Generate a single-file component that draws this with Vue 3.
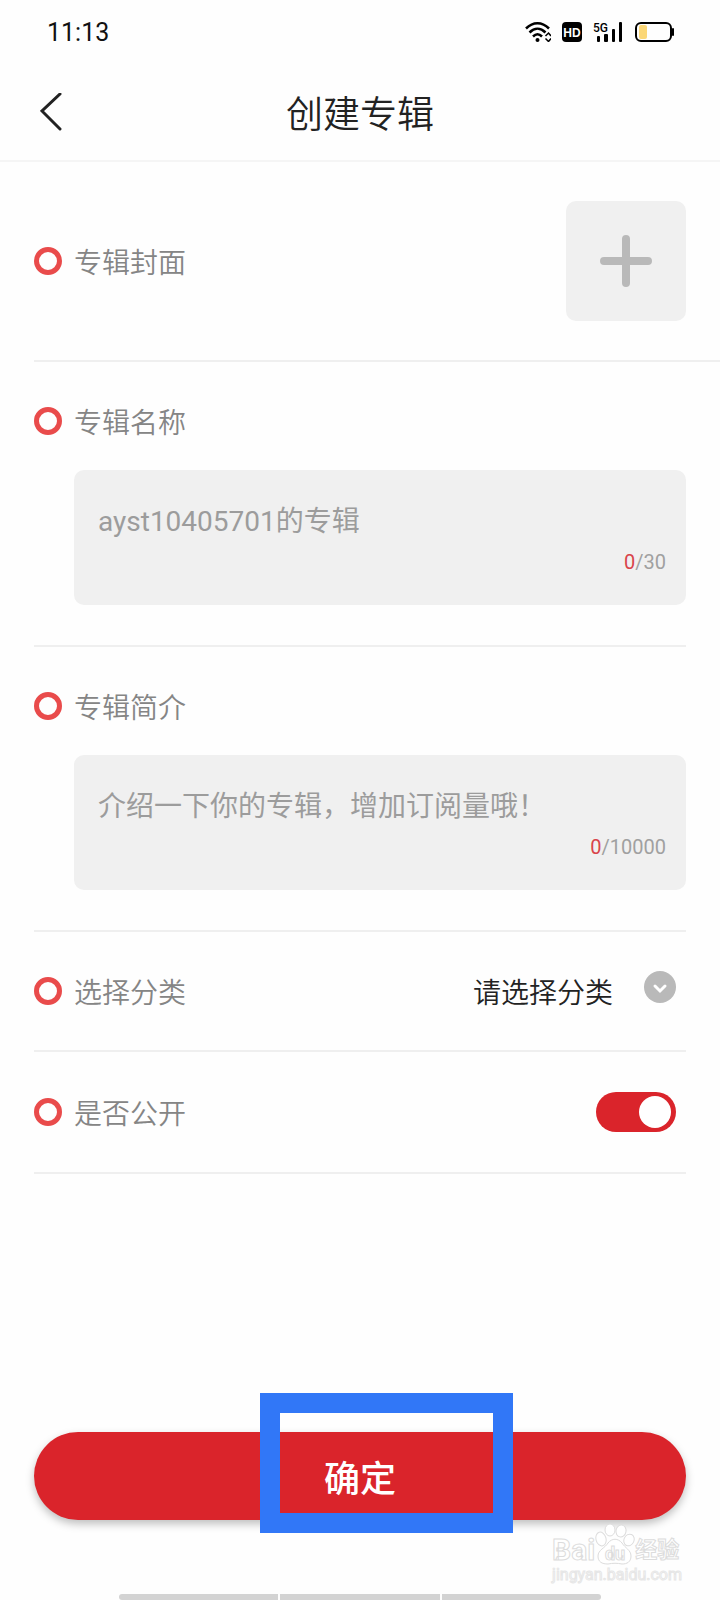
<template>
  <div class="page">
    <div class="status-bar">
      <span class="time">11:13</span>
      <div class="status-icons">
        <svg width="26" height="20" viewBox="0 0 26 20" fill="none" stroke="#000" stroke-width="2.500">
          <path d="M1 6.5C8 -0.5 17 -0.5 24 6.5" />
          <path d="M4.500 10.5C9.500 5.500 15.500 5.500 20.500 10.500" />
          <path d="M8 14.500C11 11.500 14 11.500 17 14.500" />
          <circle cx="12.500" cy="18" r="2" fill="#000" stroke="none" />
          <path d="M20.500 14L23.500 11L26 14M20.500 16.500L23.500 19.500L26 16.500" stroke-width="1.500" />
        </svg>
        <svg width="20" height="20" viewBox="0 0 20 20">
          <rect width="20" height="20" rx="4" />
          <text x="10" y="15" text-anchor="middle" class="hd-text">HD</text>
        </svg>
        <svg width="31" height="20" viewBox="0 0 31 20">
          <text x="0" y="10" class="net-text">5G</text>
          <rect x="4" y="14" width="3" height="6" rx="1" />
          <rect x="11" y="12" width="4" height="8" rx="1" />
          <rect x="19" y="7" width="3" height="13" rx="1" />
          <rect x="26" y="0" width="3" height="20" rx="1" />
        </svg>
        <svg width="39" height="20" viewBox="0 0 39 20">
          <rect x="1" y="1" width="35" height="18" rx="5" fill="none" stroke="#000" stroke-width="2" />
          <rect x="4" y="3" width="8" height="14" rx="2" fill="#fbd777" />
          <rect x="37" y="6" width="2" height="8" rx="1" />
        </svg>
      </div>
    </div>

    <header class="header">
      <button type="button" class="back" aria-label="返回">
        <svg width="24" height="38" viewBox="0 0 24 38" fill="none" stroke="#222" stroke-width="3" stroke-linecap="round">
          <path d="M20 1L2 18L20 36" />
        </svg>
      </button>
      <h1 class="title">创建专辑</h1>
    </header>

    <form class="form" @submit.prevent>
      <section class="row row-cover">
        <label class="label" for="cover"><i class="ring"></i>专辑封面</label>
        <button id="cover" type="button" class="upload">
          <svg width="52" height="52" viewBox="0 0 52 52" stroke="#b9b9b9" stroke-width="8" stroke-linecap="round">
            <path d="M26 4V48M4 26H48" />
          </svg>
        </button>
      </section>

      <section v-for="field in fields" class="block" :key="field.id">
        <label class="label" :for="field.id"><i class="ring"></i>{{ field.label }}</label>
        <div class="field">
          <textarea
            v-model="field.value"
            class="field-input"
            rows="1"
            :id="field.id"
            :maxlength="field.max"
            :placeholder="field.placeholder"
          ></textarea>
          <span class="counter"><b class="count">{{ field.value.length }}</b>/{{ field.max }}</span>
        </div>
      </section>

      <section class="row row-category">
        <label class="label" for="category"><i class="ring"></i>选择分类</label>
        <div class="select-wrap">
          <select id="category" v-model="category" class="select">
            <option value="">请选择分类</option>
          </select>
          <svg width="32" height="32" viewBox="0 0 32 32" fill="none">
            <circle cx="16" cy="16" r="16" fill="#b9b9b9" />
            <path d="M11 15L16 20L21 15" stroke="#fff" stroke-width="3" stroke-linecap="round" />
          </svg>
        </div>
      </section>

      <section class="row row-public">
        <label class="label" for="public"><i class="ring"></i>是否公开</label>
        <input id="public" v-model="isPublic" type="checkbox" class="toggle">
      </section>

      <div class="submit-wrap">
        <button type="submit" class="submit">确定</button>
        <div class="highlight"></div>
      </div>
    </form>

    <div class="home-bar"><i></i><i></i><i></i></div>

    <div class="watermark">
      <div class="mark-top">
        <span>Bai</span>
        <svg width="40" height="42" viewBox="0 0 40 42" fill="#fff" stroke="#dcdcdc">
          <ellipse cx="6" cy="16" rx="5" ry="7" transform="rotate(-15 6 16)" />
          <ellipse cx="15" cy="7" rx="5" ry="6" />
          <ellipse cx="26" cy="8" rx="5" ry="6" transform="rotate(12 26 8)" />
          <ellipse cx="34" cy="17" rx="5" ry="6" transform="rotate(25 34 17)" />
          <path d="M13 20C17 15 23 15 27 20C30 25 36 27 36 33C36 39 32 41 27 41C22 40 18 40 13 41C7 41 3 39 3 33C3 27 10 25 13 20Z" />
          <text x="20" y="37" text-anchor="middle" class="paw-text">du</text>
        </svg>
        <span class="mark-cn">经验</span>
      </div>
      <div class="mark-url">jingyan.baidu.com</div>
    </div>
  </div>
</template>

<script setup>
import { ref } from "vue";

const fields = ref([
  {
    id: "name",
    label: "专辑名称",
    placeholder: "ayst10405701的专辑",
    max: 30,
    value: "",
  },
  {
    id: "intro",
    label: "专辑简介",
    placeholder: "介绍一下你的专辑，增加订阅量哦！",
    max: 10000,
    value: "",
  },
]);
const category = ref("");
const isPublic = ref(true);
</script>

<style>
body {
  margin: 0;
  background: #fefefe;
}
</style>

<style scoped>
.page {
  position: relative;
  display: flex;
  flex-direction: column;
  min-height: 100vh;
  font-family: Roboto, "Noto Sans CJK SC", sans-serif;
  color: #222222;
}

.page * {
  box-sizing: border-box;
}

button,
select,
textarea {
  margin: 0;
  padding: 0;
  border: none;
  background: none;
  font-family: inherit;
}

svg {
  display: block;
  flex: none;
}

.status-bar {
  display: flex;
  align-items: center;
  justify-content: space-between;
  height: 64px;
  padding: 0 46px 0 47px;
}

.time {
  font-size: 25px;
  color: #111111;
}

.status-icons {
  display: flex;
  gap: 11px;
}

.hd-text {
  font-family: "Liberation Sans", sans-serif;
  font-size: 12px;
  font-weight: 700;
  fill: #ffffff;
}

.net-text {
  font-size: 12px;
  font-weight: 500;
}

.header {
  display: grid;
  grid-template-columns: 1fr auto 1fr;
  align-items: center;
  height: 98px;
  padding: 0 40px;
  border-bottom: 2px solid #f5f5f5;
}

.back {
  justify-self: start;
}

.title,
.label,
.select {
  font-family: "Noto Sans CJK SC", sans-serif;
  font-weight: 350;
}

.title {
  margin: 0;
  font-size: 37px;
  line-height: 40px;
}

.form {
  flex: 1;
  display: flex;
  flex-direction: column;
  padding: 0 34px;
}

.row,
.block {
  padding: 40px 0;
  border-bottom: 2px solid #efefef;
}

.row {
  display: flex;
  align-items: center;
  justify-content: space-between;
}

.row-cover {
  height: 200px;
  margin-right: -34px;
  padding-right: 34px;
}

.row-category {
  height: 120px;
  padding-right: 10px;
}

.row-public {
  padding-right: 10px;
}

.label {
  display: flex;
  align-items: center;
  gap: 12px;
  font-size: 28px;
  line-height: 38px;
  color: #858585;
}

.ring {
  width: 28px;
  height: 28px;
  border: 5px solid #e94b4b;
  border-radius: 50%;
}

.upload {
  display: flex;
  align-items: center;
  justify-content: center;
  width: 120px;
  height: 120px;
  border-radius: 10px;
  background: #f0f0f0;
}

.field {
  display: flex;
  flex-direction: column;
  gap: 8px;
  margin: 30px 0 0 40px;
  padding: 32px 20px 30px 24px;
  border-radius: 10px;
  background: #f0f0f0;
}

.field-input {
  height: 40px;
  font-size: 28px;
  line-height: 40px;
  color: #222222;
  resize: none;
  outline: none;
  overflow: hidden;
}

.field-input::placeholder {
  color: #9c9c9c;
}

.counter {
  align-self: flex-end;
  font-size: 20px;
  line-height: 25px;
  color: #a0a0a0;
}

.count {
  font-weight: 400;
  color: #d9444a;
}

.select-wrap {
  display: flex;
  align-items: flex-start;
  gap: 30px;
}

.select {
  appearance: none;
  height: 40px;
  font-size: 28px;
  line-height: 40px;
  color: #222222;
  outline: none;
}

.toggle {
  appearance: none;
  display: flex;
  align-items: center;
  width: 80px;
  height: 40px;
  margin: 0;
  padding: 0 5px;
  border-radius: 20px;
  background: #cccccc;
}

.toggle::before {
  content: "";
  width: 32px;
  height: 32px;
  border-radius: 50%;
  background: #ffffff;
}

.toggle:checked {
  justify-content: flex-end;
  background: #da242b;
}

.submit-wrap {
  position: relative;
  margin-top: auto;
  padding-bottom: 74px;
}

.submit {
  display: block;
  width: 100%;
  height: 88px;
  border-radius: 44px;
  background: #da242b;
  box-shadow: 0 4px 8px rgba(0, 0, 0, 0.25);
  font-size: 36px;
  font-weight: 500;
  color: #ffffff;
}

/* Рамка поверх кнопки */
.highlight {
  position: absolute;
  top: -39px;
  left: calc(50% - 100px);
  width: 253px;
  height: 140px;
  border: 20px solid #3177f7;
  pointer-events: none;
}

.home-bar {
  display: flex;
  gap: 2px;
  width: 67%;
  height: 6px;
  margin: 0 auto;
  border-radius: 3px;
  overflow: hidden;
}

.home-bar i {
  flex: 1;
  background: #d3d3d3;
}

.watermark {
  position: absolute;
  right: 38px;
  bottom: 15px;
  color: #ffffff;
  -webkit-text-stroke: 1px #dcdcdc;
  pointer-events: none;
}

.mark-top {
  display: flex;
  align-items: flex-end;
  font-size: 30px;
  line-height: 30px;
  font-weight: 700;
}

.mark-cn {
  font-size: 22px;
}

.paw-text {
  font-size: 18px;
}

.mark-url {
  font-size: 16px;
  line-height: 20px;
  -webkit-text-stroke: 1px #e6e6e6;
}
</style>
